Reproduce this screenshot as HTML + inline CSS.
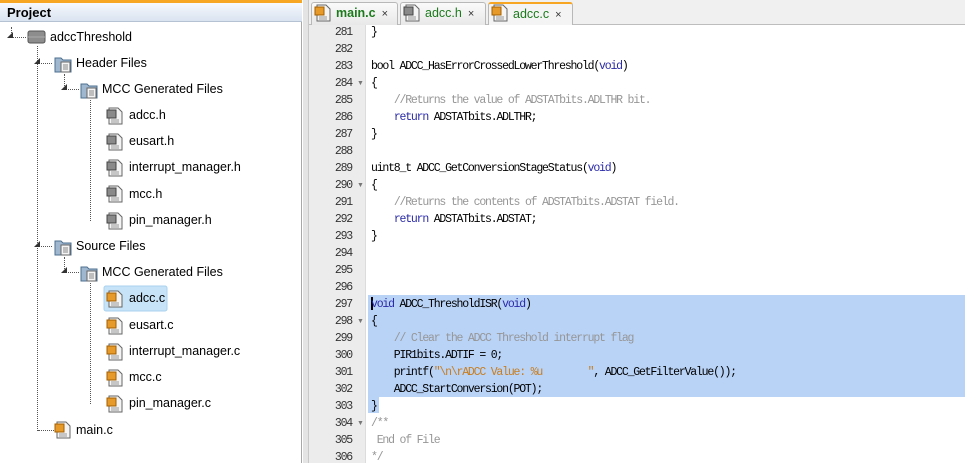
<!DOCTYPE html>
<html><head><meta charset="utf-8"><style>
*{margin:0;padding:0;box-sizing:border-box}
body{width:965px;height:463px;overflow:hidden;background:#fff;font-family:"Liberation Sans","DejaVu Sans",sans-serif;position:relative}
.abs{position:absolute}
#left{left:0;top:0;width:302px;height:463px;background:#fff;border-right:1px solid #a8a8a8}
#ptitle{left:0;top:0;width:302px;height:22px;background:linear-gradient(#f7f9fc,#d9e3f0);border-top:3px solid #f6a623;border-bottom:1px solid #b5c2d3;font-weight:bold;font-size:13px;padding:2px 0 0 7px;color:#000}
.row{position:absolute;font-size:12.5px;color:#000;height:18px;line-height:18px;white-space:nowrap}
.vl{position:absolute;border-left:1px dotted #555;width:0}
.hl{position:absolute;border-top:1px dotted #555;height:0}
.exp{position:absolute;width:0;height:0;border-left:6px solid transparent;border-bottom:6px solid #333}
#sep{left:303px;top:0;width:6px;height:463px;background:#e4e4e4;border-right:1px solid #c8c8c8}
#tabs{left:309px;top:0;width:656px;height:25px;background:#f0f0f0;border-bottom:1px solid #bdbdbd}
.tab{position:absolute;top:2px;height:23px;border:1px solid #b8b8b8;border-bottom:none;border-radius:3px 3px 0 0;background:linear-gradient(#fafafa,#e8e8e8);font-size:12.5px;line-height:21px;padding-left:24px;white-space:nowrap}
.tab .x{font-size:11px;color:#333;margin-left:6px;font-weight:normal}
#gut{left:309px;top:25px;width:57px;height:438px;background:#ececec;border-right:1px solid #dcdcdc}
.ln{position:absolute;left:309px;width:43px;text-align:right;font-family:"Liberation Mono",monospace;font-size:11.5px;letter-spacing:-1.2px;color:#333;height:17px;line-height:17px}
.fold{position:absolute;left:357px;font-size:7px;color:#777;height:17px;line-height:17px}
.cl{position:absolute;left:371px;font-family:"Liberation Mono",monospace;font-size:11.5px;letter-spacing:-1.2px;color:#000;height:17px;line-height:17px;white-space:pre}
.k{color:#2a2aa8}.c{color:#969696}.s{color:#c87d1e}
</style></head><body>
<div id="left" class="abs"></div>
<div id="ptitle" class="abs">Project</div>

<div class="vl" style="left:11px;top:27px;height:10px"></div>
<div class="hl" style="left:12px;top:37px;width:14px"></div>
<div class="exp" style="left:7px;top:32px"></div>
<div class="vl" style="left:37px;top:46px;height:385px"></div>
<div class="hl" style="left:38px;top:63px;width:14px"></div>
<div class="exp" style="left:34px;top:58px"></div>
<div class="hl" style="left:38px;top:246px;width:14px"></div>
<div class="exp" style="left:34px;top:241px"></div>
<div class="hl" style="left:38px;top:430px;width:16px"></div>
<div class="vl" style="left:64px;top:74px;height:16px"></div>
<div class="hl" style="left:65px;top:89px;width:14px"></div>
<div class="exp" style="left:61px;top:84px"></div>
<div class="vl" style="left:64px;top:257px;height:16px"></div>
<div class="hl" style="left:65px;top:272px;width:14px"></div>
<div class="exp" style="left:61px;top:267px"></div>
<div class="vl" style="left:90px;top:100px;height:121px"></div>
<div class="vl" style="left:90px;top:283px;height:121px"></div>

<svg class="abs" style="left:0;top:0" width="302" height="463">
<defs>
<g id="fold"><path d="M1 3h6l2 2h8v12H1z" fill="#9fb8d0" stroke="#4e6f8f"/><rect x="7" y="7" width="9" height="10" fill="#f4f4f4" stroke="#666"/><path d="M9 10h5M9 12h5M9 14h5" stroke="#888"/></g>
<g id="cf"><path d="M3 1h9l4 4v12H3z" fill="#f4f4f4" stroke="#666"/><rect x="1" y="3" width="9" height="8" fill="#e69a2a" stroke="#a45f00"/><path d="M5 13h8M5 15h8" stroke="#999"/></g>
<g id="hf"><path d="M3 1h9l4 4v12H3z" fill="#f4f4f4" stroke="#666"/><rect x="1" y="3" width="9" height="8" fill="#8a8a8a" stroke="#444"/><path d="M5 13h8M5 15h8" stroke="#999"/></g>
</defs>
<g transform="translate(28,31)"><rect x="0" y="0" width="17" height="12" rx="2" fill="#8d8d8d" stroke="#555"/><path d="M0 6h17" stroke="#aaa"/></g>
<use href="#fold" x="54" y="55"/>
<use href="#fold" x="80" y="81"/>
<use href="#hf" x="106" y="107"/>
<use href="#hf" x="106" y="133"/>
<use href="#hf" x="106" y="159"/>
<use href="#hf" x="106" y="185"/>
<use href="#hf" x="106" y="212"/>
<use href="#fold" x="54" y="238"/>
<use href="#fold" x="80" y="264"/>
<rect x="104" y="286" width="63" height="25" rx="2" fill="#c7e3f7" stroke="#a8d2ef"/>
<use href="#cf" x="106" y="290"/>
<use href="#cf" x="106" y="317"/>
<use href="#cf" x="106" y="343"/>
<use href="#cf" x="106" y="369"/>
<use href="#cf" x="106" y="395"/>
<use href="#cf" x="54" y="421"/>
</svg>

<div class="row" style="left:50px;top:28px">adccThreshold</div>
<div class="row" style="left:76px;top:54px">Header Files</div>
<div class="row" style="left:102px;top:80px">MCC Generated Files</div>
<div class="row" style="left:129px;top:106px">adcc.h</div>
<div class="row" style="left:129px;top:132px">eusart.h</div>
<div class="row" style="left:129px;top:158px">interrupt_manager.h</div>
<div class="row" style="left:129px;top:185px">mcc.h</div>
<div class="row" style="left:129px;top:211px">pin_manager.h</div>
<div class="row" style="left:76px;top:237px">Source Files</div>
<div class="row" style="left:102px;top:263px">MCC Generated Files</div>
<div class="row" style="left:129px;top:289px">adcc.c</div>
<div class="row" style="left:129px;top:316px">eusart.c</div>
<div class="row" style="left:129px;top:342px">interrupt_manager.c</div>
<div class="row" style="left:129px;top:368px">mcc.c</div>
<div class="row" style="left:129px;top:394px">pin_manager.c</div>
<div class="row" style="left:76px;top:421px">main.c</div>

<div id="sep" class="abs"></div>
<div id="tabs" class="abs"></div>
<div class="tab" style="left:311px;width:87px;font-weight:bold;color:#1c7a1c">main.c<span class="x">×</span></div>
<div class="tab" style="left:400px;width:86px;color:#1c7a1c">adcc.h<span class="x">×</span></div>
<div class="tab" style="left:488px;width:85px;color:#1c7a1c;background:#f4f4f4;border-top:2px solid #f6a623">adcc.c<span class="x">×</span></div>
<svg class="abs" style="left:0;top:0;z-index:2" width="965" height="25">
<use href="#cf" x="314" y="4"/><use href="#hf" x="403" y="4"/><use href="#cf" x="491" y="4"/>
</svg>

<div id="gut" class="abs"></div>
<div class="abs" style="left:368px;top:295px;width:597px;height:102px;background:#b9d3f7"></div>
<div class="abs" style="left:368px;top:396px;width:11px;height:17px;background:#b9d3f7"></div>
<div class="abs" style="left:371px;top:297px;width:2px;height:13px;background:#000"></div>

<div class="ln" style="top:24px">281</div><div class="cl" style="top:24px">}</div>
<div class="ln" style="top:41px">282</div>
<div class="ln" style="top:58px">283</div><div class="cl" style="top:58px">bool ADCC_HasErrorCrossedLowerThreshold(<span class="k">void</span>)</div>
<div class="ln" style="top:75px">284</div><div class="fold" style="top:75px">▼</div><div class="cl" style="top:75px">{</div>
<div class="ln" style="top:92px">285</div><div class="cl" style="top:92px">    <span class="c">//Returns the value of ADSTATbits.ADLTHR bit.</span></div>
<div class="ln" style="top:109px">286</div><div class="cl" style="top:109px">    <span class="k">return</span> ADSTATbits.ADLTHR;</div>
<div class="ln" style="top:126px">287</div><div class="cl" style="top:126px">}</div>
<div class="ln" style="top:143px">288</div>
<div class="ln" style="top:160px">289</div><div class="cl" style="top:160px">uint8_t ADCC_GetConversionStageStatus(<span class="k">void</span>)</div>
<div class="ln" style="top:177px">290</div><div class="fold" style="top:177px">▼</div><div class="cl" style="top:177px">{</div>
<div class="ln" style="top:194px">291</div><div class="cl" style="top:194px">    <span class="c">//Returns the contents of ADSTATbits.ADSTAT field.</span></div>
<div class="ln" style="top:211px">292</div><div class="cl" style="top:211px">    <span class="k">return</span> ADSTATbits.ADSTAT;</div>
<div class="ln" style="top:228px">293</div><div class="cl" style="top:228px">}</div>
<div class="ln" style="top:245px">294</div>
<div class="ln" style="top:262px">295</div>
<div class="ln" style="top:279px">296</div>
<div class="ln" style="top:296px">297</div><div class="cl" style="top:296px"><span class="k">void</span> ADCC_ThresholdISR(<span class="k">void</span>)</div>
<div class="ln" style="top:313px">298</div><div class="fold" style="top:313px">▼</div><div class="cl" style="top:313px">{</div>
<div class="ln" style="top:330px">299</div><div class="cl" style="top:330px">    <span class="c">// Clear the ADCC Threshold interrupt flag</span></div>
<div class="ln" style="top:347px">300</div><div class="cl" style="top:347px">    PIR1bits.ADTIF = 0;</div>
<div class="ln" style="top:364px">301</div><div class="cl" style="top:364px">    printf(<span class="s">"\n\rADCC Value: %u        "</span>, ADCC_GetFilterValue());</div>
<div class="ln" style="top:381px">302</div><div class="cl" style="top:381px">    ADCC_StartConversion(POT);</div>
<div class="ln" style="top:398px">303</div><div class="cl" style="top:398px">}</div>
<div class="ln" style="top:415px">304</div><div class="fold" style="top:415px">▼</div><div class="cl" style="top:415px"><span class="c">/**</span></div>
<div class="ln" style="top:432px">305</div><div class="cl" style="top:432px"><span class="c"> End of File</span></div>
<div class="ln" style="top:449px">306</div><div class="cl" style="top:449px"><span class="c">*/</span></div>
</body></html>
